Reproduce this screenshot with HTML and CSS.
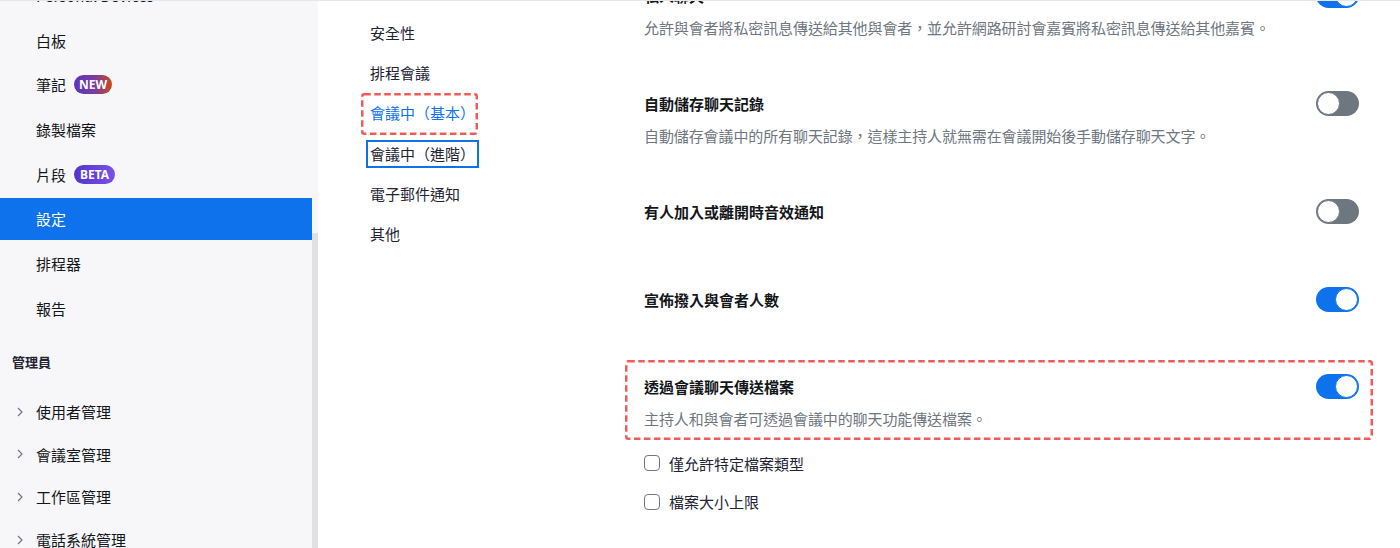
FILE: index.html
```html
<!DOCTYPE html>
<html lang="zh-Hant">
<head>
  <meta charset="UTF-8">
  <title>設定 - 會議中（基本）</title>
  <link rel="stylesheet" href="styles.css">
</head>
<body>

  <div class="page">

    <aside class="sidebar">
      <nav class="side-nav">
        <ul class="side-list">
          <li class="side-item">Personal Devices</li>
          <li class="side-item">白板</li>
          <li class="side-item">筆記 <span class="badge badge-new">NEW</span></li>
          <li class="side-item">錄製檔案</li>
          <li class="side-item">片段 <span class="badge badge-beta">BETA</span></li>
          <li class="side-item active">設定</li>
          <li class="side-item">排程器</li>
          <li class="side-item">報告</li>
        </ul>

        <div class="side-heading">管理員</div>

        <ul class="admin-list">
          <li class="admin-item">
            <svg class="chevron" width="6" height="10" viewBox="0 0 6 10"><path d="M1 1l4 4-4 4" fill="none" stroke="#747487" stroke-width="1.2"/></svg>
            使用者管理
          </li>
          <li class="admin-item">
            <svg class="chevron" width="6" height="10" viewBox="0 0 6 10"><path d="M1 1l4 4-4 4" fill="none" stroke="#747487" stroke-width="1.2"/></svg>
            會議室管理
          </li>
          <li class="admin-item">
            <svg class="chevron" width="6" height="10" viewBox="0 0 6 10"><path d="M1 1l4 4-4 4" fill="none" stroke="#747487" stroke-width="1.2"/></svg>
            工作區管理
          </li>
          <li class="admin-item">
            <svg class="chevron" width="6" height="10" viewBox="0 0 6 10"><path d="M1 1l4 4-4 4" fill="none" stroke="#747487" stroke-width="1.2"/></svg>
            電話系統管理
          </li>
        </ul>
      </nav>
      <div class="scroll-track"><div class="scroll-thumb"></div></div>
    </aside>

    <nav class="sub-nav">
      <a class="sub-link">安全性</a>
      <a class="sub-link">排程會議</a>
      <a class="sub-link current">會議中（基本）
        <svg class="mark"><rect rx="2"/></svg>
      </a>
      <a class="sub-link focused">會議中（進階）</a>
      <a class="sub-link">電子郵件通知</a>
      <a class="sub-link">其他</a>
    </nav>

    <main class="settings">

      <div class="setting">
        <div class="setting-head">
          <span class="setting-title">私人聊天</span>
          <span class="toggle on"><span class="knob"></span></span>
        </div>
        <p class="setting-desc">允許與會者將私密訊息傳送給其他與會者，並允許網路研討會嘉賓將私密訊息傳送給其他嘉賓。</p>
      </div>

      <div class="setting">
        <div class="setting-head">
          <span class="setting-title">自動儲存聊天記錄</span>
          <span class="toggle"><span class="knob"></span></span>
        </div>
        <p class="setting-desc">自動儲存會議中的所有聊天記錄，這樣主持人就無需在會議開始後手動儲存聊天文字。</p>
      </div>

      <div class="setting plain">
        <div class="setting-head">
          <span class="setting-title">有人加入或離開時音效通知</span>
          <span class="toggle"><span class="knob"></span></span>
        </div>
      </div>

      <div class="setting plain">
        <div class="setting-head">
          <span class="setting-title">宣佈撥入與會者人數</span>
          <span class="toggle on"><span class="knob"></span></span>
        </div>
      </div>

      <div class="setting">
        <div class="setting-main">
          <div class="setting-head">
            <span class="setting-title">透過會議聊天傳送檔案</span>
            <span class="toggle on"><span class="knob"></span></span>
          </div>
          <p class="setting-desc">主持人和與會者可透過會議中的聊天功能傳送檔案。</p>
          <svg class="mark"><rect rx="2"/></svg>
        </div>
        <ul class="options">
          <li class="option"><span class="checkbox"></span>僅允許特定檔案類型</li>
          <li class="option"><span class="checkbox"></span>檔案大小上限</li>
        </ul>
      </div>

    </main>
  </div>

</body>
</html>
```

FILE: styles.css
```css
* {
  box-sizing: border-box;
}
html, body {
  margin: 0;
  height: 548px;
  overflow: hidden;
}
body {
  font-family: "Noto Sans CJK TC", "Noto Sans", sans-serif;
  color: #232333;
  background: #fff;
  border-top: 1px solid #e6e6ea;
}
ul {
  list-style: none;
  margin: 0;
  padding: 0;
}
p {
  margin: 0;
}
.page {
  display: flex;
  height: 547px;
  overflow: hidden;
}

/* sidebar */
.sidebar {
  width: 318px;
  flex-shrink: 0;
  display: flex;
  background: #f7f7fa;
}
.side-nav {
  width: 312px;
}
.side-list {
  display: flex;
  flex-direction: column;
  gap: 2.67px;
  margin-top: -26.5px;
}
.side-item {
  height: 42px;
  display: flex;
  align-items: center;
  padding-left: 36px;
  font-size: 15px;
  color: #131619;
}
.side-item.active {
  background: #0e72ed;
  color: #fff;
}
.badge {
  display: inline-flex;
  align-items: center;
  height: 19px;
  margin-left: 8px;
  padding: 0 5px;
  border-radius: 10px;
  color: #fff;
  font-family: "Noto Sans", sans-serif;
  font-size: 12px;
  font-weight: 700;
}
.badge-new {
  background: linear-gradient(90deg, #5a36b8, #7b3ba0 55%, #c84b1a);
}
.badge-beta {
  background: linear-gradient(90deg, #5434c8, #7a52ea);
  padding: 0 6px;
}
.side-heading {
  margin: 22.5px 0 0 12px;
  height: 20px;
  line-height: 20px;
  font-size: 13px;
  font-weight: 700;
  color: #232333;
}
.admin-list {
  margin-top: 18.7px;
}
.admin-item {
  height: 42.67px;
  display: flex;
  align-items: center;
  padding-left: 17px;
  font-size: 15px;
  color: #131619;
}
.chevron {
  margin-right: 13px;
}
.scroll-track {
  width: 6px;
}
.scroll-thumb {
  margin-top: 232px;
  height: 320px;
  background: #e1e1e3;
}

/* sub navigation */
.sub-nav {
  width: 286px;
  flex-shrink: 0;
  display: flex;
  flex-direction: column;
  align-items: flex-start;
  gap: 12.4px;
  padding: 17.5px 0 0 48px;
}
.sub-link {
  position: relative;
  height: 28px;
  line-height: 24px;
  padding: 0 2px;
  border: 2px solid transparent;
  font-size: 15px;
  color: #232333;
}
.sub-link.current {
  color: #0e72ed;
}
.sub-link.focused {
  border-color: #0e72ed;
}

/* annotation boxes */
.mark {
  position: absolute;
  overflow: visible;
  pointer-events: none;
}
.mark rect {
  x: 1.25px;
  y: 1.25px;
  width: calc(100% - 2.5px);
  height: calc(100% - 2.5px);
  fill: none;
  stroke: #f25a5a;
  stroke-width: 2.5;
  stroke-dasharray: 6.5 3.5;
}
.sub-link .mark {
  top: -8px;
  left: -7px;
  width: 117px;
  height: 42px;
}
.setting-main {
  position: relative;
}
.setting-main .mark {
  top: -15px;
  left: -19px;
  width: calc(100% + 33px);
  height: calc(100% + 26px);
}

/* settings */
.settings {
  flex: 1;
  display: flex;
  flex-direction: column;
  gap: 54px;
  padding: 0 41px 0 40px;
  margin-top: -17.5px;
}
.setting.plain {
  padding-bottom: 9.5px;
}
.setting-head {
  display: flex;
  align-items: center;
  justify-content: space-between;
  height: 24px;
}
.setting-title {
  font-size: 15px;
  font-weight: 700;
  color: #131619;
}
.setting-desc {
  margin-top: 9px;
  line-height: 21px;
  font-size: 15px;
  letter-spacing: -0.1px;
  color: #6e7680;
}
.toggle {
  display: flex;
  align-items: center;
  justify-content: flex-start;
  width: 43px;
  height: 25px;
  padding: 1px;
  border-radius: 13px;
  background: #6e7680;
}
.toggle.on {
  justify-content: flex-end;
  background: #0e72ed;
}
.knob {
  width: 23px;
  height: 23px;
  border-radius: 50%;
  background: #fff;
  border: 1.5px solid #6e7680;
}
.toggle.on .knob {
  border-color: #0e72ed;
}
.options {
  margin-top: 23.5px;
  display: flex;
  flex-direction: column;
  gap: 16.5px;
}
.option {
  height: 22px;
  display: flex;
  align-items: center;
  font-size: 15px;
  color: #232333;
}
.checkbox {
  width: 16px;
  height: 16px;
  margin-right: 9px;
  border: 1.5px solid #747487;
  border-radius: 4px;
  background: #fff;
}
```
